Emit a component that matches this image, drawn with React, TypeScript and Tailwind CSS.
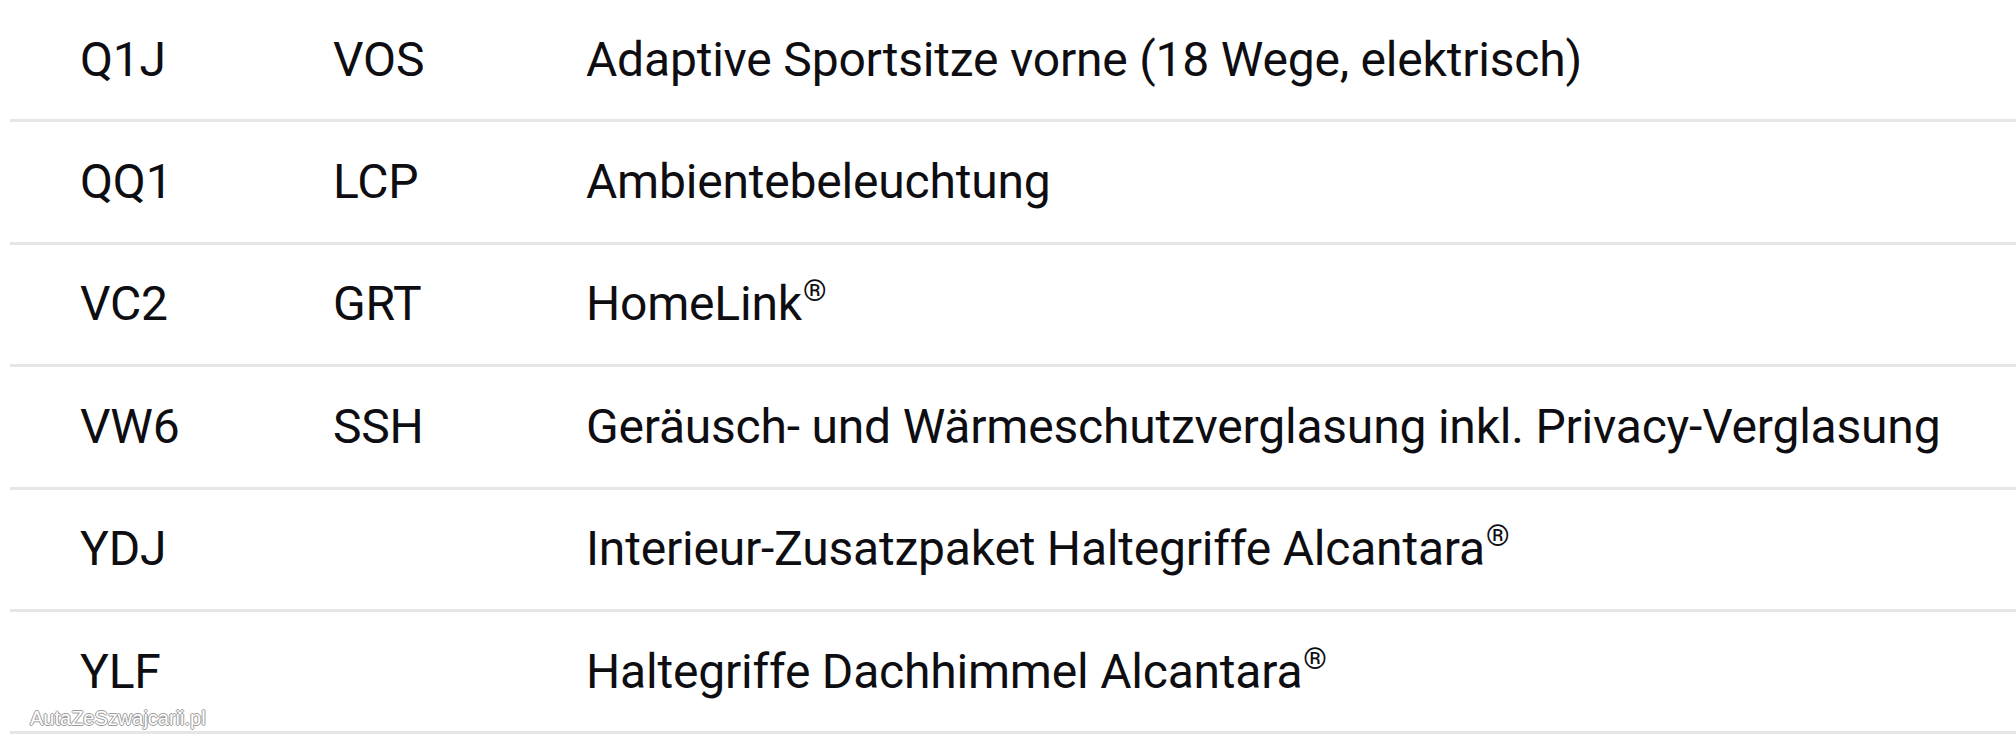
type Option = {
  code: string;
  color: string;
  label: string;
  registered?: boolean;
};

const options: Option[] = [
  { code: 'Q1J', color: 'VOS', label: 'Adaptive Sportsitze vorne (18 Wege, elektrisch)' },
  { code: 'QQ1', color: 'LCP', label: 'Ambientebeleuchtung' },
  { code: 'VC2', color: 'GRT', label: 'HomeLink', registered: true },
  { code: 'VW6', color: 'SSH', label: 'Geräusch- und Wärmeschutzverglasung inkl. Privacy-Verglasung' },
  { code: 'YDJ', color: '', label: 'Interieur-Zusatzpaket Haltegriffe Alcantara', registered: true },
  { code: 'YLF', color: '', label: 'Haltegriffe Dachhimmel Alcantara', registered: true },
];

export default function App() {
  return (
    <div className="relative bg-white min-h-[743px] overflow-hidden font-['Roboto',sans-serif] text-[#0e0e12]">
      <div>
        {options.map((opt) => (
          <div
            key={opt.code}
            className="ml-[10px] h-[122.4px] border-b-[3px] border-[#e5e6e7] pl-[70px] grid grid-cols-[253px_253px_1fr] items-center text-[48px] leading-[56px] tracking-[-0.2px]"
          >
            <span>{opt.code}</span>
            <span>{opt.color}</span>
            <span className="whitespace-nowrap">
              {opt.label}
              {opt.registered && (
                <span className="ml-[1px] text-[30px] align-[19px] leading-none">®</span>
              )}
            </span>
          </div>
        ))}
      </div>

      {/* watermark */}
      <div className="absolute left-[30px] top-[703px] font-['Liberation_Sans',sans-serif] text-[20px] text-white [text-shadow:1px_0_0_#9a9a9a,-1px_0_0_#9a9a9a,0_1px_0_#9a9a9a,0_-1px_0_#9a9a9a]">
        AutaZeSzwajcarii.pl
      </div>
    </div>
  );
}
